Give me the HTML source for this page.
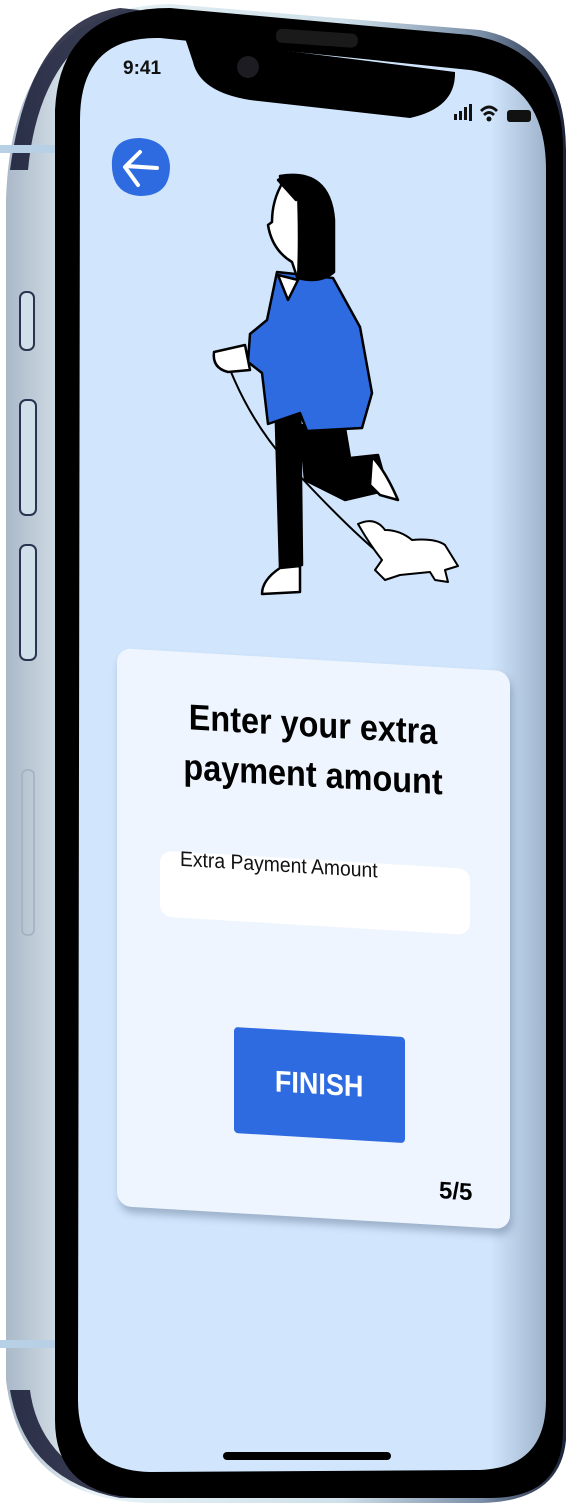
<!DOCTYPE html>
<html><head><meta charset="utf-8"><style>
*{margin:0;padding:0;box-sizing:border-box}
body{width:568px;height:1507px;background:#fff;position:relative;overflow:hidden;font-family:"Liberation Sans",sans-serif}
.abs{position:absolute}
#card{left:117px;top:648px;width:393px;height:558px;background:#eef5fe;border-radius:14px;transform:skewY(3.4deg);transform-origin:0 0;box-shadow:2px 6px 8px rgba(60,80,110,.35)}
.n{display:inline-block;transform:scaleX(.9);transform-origin:center}
</style></head><body>
<svg class="abs" style="left:0;top:0" width="568" height="1507" viewBox="0 0 568 1507">
<defs>
<linearGradient id="metal" x1="0" x2="1" y1="0" y2="0">
<stop offset="0" stop-color="#aab8c8"/><stop offset=".15" stop-color="#e6f2f6"/><stop offset=".6" stop-color="#cfe0ea"/><stop offset=".85" stop-color="#7a8ea8"/><stop offset="1" stop-color="#1a2238"/></linearGradient>
<linearGradient id="scr" x1="0" x2="1" y1="0" y2="0">
<stop offset="0" stop-color="#d1e6fd"/><stop offset=".88" stop-color="#d1e6fd"/><stop offset="1" stop-color="#9fb4cc"/></linearGradient>
</defs>
<path d="M6 200 Q12 8 170 4 L480 30 Q565 45 566 150 L566 1440 Q560 1502 480 1503 L150 1503 Q20 1500 6 1380 Z" fill="url(#metal)"/>
<path d="M10 170 Q30 20 120 8 L140 10 Q40 40 28 170 Z" fill="#0a0c28" opacity=".8"/>
<path d="M10 1390 Q25 1480 120 1498 L140 1498 Q40 1470 30 1390 Z" fill="#0a0c28" opacity=".8"/>
<rect x="0" y="145" width="55" height="8" fill="#b8d0e6"/>
<rect x="0" y="1340" width="55" height="8" fill="#b8d0e6"/>
<rect x="20" y="292" width="14" height="58" rx="6" fill="#cfe0ea" stroke="#2a3450" stroke-width="2"/>
<rect x="20" y="400" width="16" height="115" rx="6" fill="#cfe0ea" stroke="#2a3450" stroke-width="2"/>
<rect x="20" y="545" width="16" height="115" rx="6" fill="#cfe0ea" stroke="#2a3450" stroke-width="2"/>
<rect x="22" y="770" width="12" height="165" rx="5" fill="none" stroke="#9fb0c0" stroke-width="1.5"/>
<path d="M55 110 Q60 8 170 8 L470 35 Q563 50 563 150 L563 1430 Q563 1498 490 1498 L140 1498 Q55 1495 55 1420 Z" fill="#000"/>
<path d="M80 120 Q80 36 160 38 L470 70 Q546 82 546 170 L546 1400 Q546 1470 475 1470 L150 1472 Q78 1470 78 1400 Z" fill="url(#scr)"/>
<path d="M185 38 L455 72 Q456 108 410 118 L250 100 Q200 92 193 62 Z" fill="#000"/>
<rect x="276" y="30" width="82" height="14" rx="6" fill="#1a1a1a" transform="rotate(4 300 36)"/>
<circle cx="248" cy="67" r="11" fill="#1c1c22"/>
<rect x="223" y="1452" width="168" height="8" rx="4" fill="#000"/>
<g fill="#111">
<rect x="454" y="114" width="3" height="6"/><rect x="459" y="111" width="3" height="9"/><rect x="464" y="107" width="3" height="13"/><rect x="469" y="104" width="3" height="17"/>
<path d="M480 110 Q489 101 498 110 L496 112 Q489 105 482 112Z"/><path d="M483 114 Q489 108 495 114 L493 116 Q489 112 485 116Z"/><circle cx="489" cy="119" r="2.5"/>
<rect x="507" y="110" width="24" height="12" rx="3"/>
</g>
<path d="M112 160 Q114 138 140 138 Q168 140 170 166 Q170 196 140 196 Q110 194 112 160Z" fill="#2f6be0"/>
<path d="M157 168 L126 166 M140 152 L125 167 L138 185" stroke="#fff" stroke-width="4" fill="none" stroke-linecap="round" stroke-linejoin="round"/>
<g stroke="#000" stroke-width="2.5" stroke-linejoin="round" stroke-linecap="round">
<path d="M229 367 Q250 420 285 460 Q340 520 375 550" fill="none" stroke-width="2"/>
<path d="M275 390 L300 390 L302 565 L280 568 Z" fill="#000"/>
<path d="M300 425 L345 428 L350 458 L378 455 L388 490 L345 500 L305 480 Z" fill="#000"/>
<path d="M372 457 Q385 470 398 500 L380 495 L370 485 Z" fill="#fff"/>
<path d="M280 568 L300 566 L300 592 L262 594 Q262 580 280 568Z" fill="#fff"/>
<path d="M277 272 L333 278 L360 327 L372 393 L362 428 L307 431 L300 413 L268 424 L262 373 L248 362 L250 334 L267 320 Z" fill="#2f6be0"/>
<path d="M214 352 L245 345 L250 370 L228 372 Q212 368 214 352Z" fill="#fff"/>
<path d="M278 275 L298 280 L288 300 Z" fill="#fff"/>
<path d="M280 176 Q330 168 334 220 L334 272 Q320 284 298 278 L290 250 Z" fill="#000"/>
<path d="M283 182 Q272 200 272 222 L268 225 Q272 250 292 262 L298 280 Q300 240 298 190 Z" fill="#fff"/>
<path d="M278 180 Q296 170 305 190 L296 200 Z" fill="#000"/>
<path d="M358 524 Q375 516 385 530 Q400 530 412 540 Q435 538 445 545 L458 566 L445 570 L448 582 L435 580 L430 572 L400 575 L385 580 L375 570 L382 560 Q370 545 358 524Z" fill="#fff" stroke-width="2"/>
</g>
</svg>
<div class="abs" style="left:123px;top:58px;font-size:19px;font-weight:bold;color:#111">9:41</div>
<div id="card" class="abs">
<div class="abs" style="left:0;top:40px;width:393px;text-align:center;font-size:36px;font-weight:bold;line-height:50px;color:#000"><span class="n">Enter your extra</span><br><span class="n">payment amount</span></div>
<div class="abs" style="left:43px;top:200px;width:310px;height:66px;background:#fff;border-radius:12px"></div>
<div class="abs" style="left:63px;top:196px;font-size:21px;color:#111;transform:scaleX(.92);transform-origin:0 0">Extra Payment Amount</div>
<div class="abs" style="left:117px;top:372px;width:171px;height:106px;background:#2f6be0;border-radius:4px;color:#fff;font-size:30px;font-weight:bold;text-align:center;line-height:106px"><span class="n">FINISH</span></div>
<div class="abs" style="left:322px;top:510px;font-size:24px;font-weight:bold;color:#000">5/5</div>
</div>
</body></html>
